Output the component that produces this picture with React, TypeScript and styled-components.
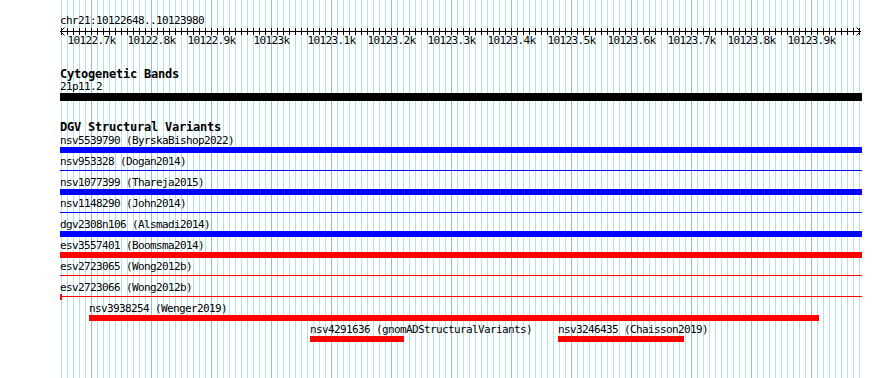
import React from 'react';
import styled, { createGlobalStyle } from 'styled-components';

const Global = createGlobalStyle`
  html, body { margin: 0; padding: 0; background: #ffffff; }
  body { font-family: "DejaVu Sans Mono", "Liberation Mono", monospace; color: #000; }
`;

const PANEL_W = 802;
const PANEL_H = 378;
const bpToX = (bp: number) => (bp - 10122700) * 0.6 + 31;

const Page = styled.div`
  width: 890px;
  height: ${PANEL_H}px;
  background: #ffffff;
  overflow: hidden;
`;

const Panel = styled.div`
  position: relative;
  margin-left: 60px;
  width: ${PANEL_W}px;
  height: ${PANEL_H}px;
`;

const GridLayer = styled.svg`
  position: absolute;
  left: 0;
  top: 0;
  display: block;
  shape-rendering: crispEdges;
`;

const Content = styled.div`
  position: relative;
  display: flex;
  flex-direction: column;
`;

const RulerSvg = styled.svg`
  display: block;
  flex: none;
  font-family: "DejaVu Sans Mono", monospace;
  font-size: 11px;
`;

const TrackTitle = styled.div`
  margin-top: 21px;
  height: 12px;
  line-height: 10px;
  font-size: 12px;
  font-weight: bold;
  letter-spacing: -0.22px;
  white-space: nowrap;
`;

const BandLabel = styled.div`
  margin-top: 1px;
  height: 11px;
  line-height: 9px;
  font-size: 11px;
  letter-spacing: -0.62px;
  white-space: nowrap;
`;

const BandBar = styled.div`
  height: 8px;
  background: #000;
`;

const Rows = styled.div`
  margin-top: 2px;
  display: flex;
  flex-direction: column;
`;

const Row = styled.div`
  position: relative;
  height: 21px;
`;

const Feature = styled.div`
  position: absolute;
  top: 0;
  display: flex;
  flex-direction: column;
`;

const FeatureLabel = styled.div`
  height: 11px;
  line-height: 9px;
  font-size: 11px;
  letter-spacing: -0.62px;
  white-space: nowrap;
`;

const BarSlot = styled.div`
  position: relative;
  height: 6px;
`;

const ThickBar = styled.div<{ $color: string }>`
  height: 6px;
  background: ${(p) => p.$color};
`;

const ThinBar = styled.div<{ $color: string }>`
  margin-top: 2px;
  height: 1px;
  background: ${(p) => p.$color};
`;

const StartCap = styled.div<{ $color: string }>`
  position: absolute;
  left: 0;
  top: 0;
  width: 2px;
  height: 6px;
  background: ${(p) => p.$color};
`;

type Feat = {
  label: string;
  left: number;
  width: number;
  color: string;
  thin?: boolean;
  cap?: boolean;
};

const BLUE = '#0000ff';
const RED = '#ff0000';

const rows: Feat[][] = [
  [{ label: 'nsv5539790 (ByrskaBishop2022)', left: 0, width: PANEL_W, color: BLUE }],
  [{ label: 'nsv953328 (Dogan2014)', left: 0, width: PANEL_W, color: BLUE, thin: true }],
  [{ label: 'nsv1077399 (Thareja2015)', left: 0, width: PANEL_W, color: BLUE }],
  [{ label: 'nsv1148290 (John2014)', left: 0, width: PANEL_W, color: BLUE, thin: true }],
  [{ label: 'dgv2308n106 (Alsmadi2014)', left: 0, width: PANEL_W, color: BLUE }],
  [{ label: 'esv3557401 (Boomsma2014)', left: 0, width: PANEL_W, color: RED }],
  [{ label: 'esv2723065 (Wong2012b)', left: 0, width: PANEL_W, color: RED, thin: true }],
  [{ label: 'esv2723066 (Wong2012b)', left: 0, width: PANEL_W, color: RED, thin: true, cap: true }],
  [{ label: 'nsv3938254 (Wenger2019)', left: 29, width: 730, color: RED }],
  [
    { label: 'nsv4291636 (gnomADStructuralVariants)', left: 250, width: 94, color: RED },
    { label: 'nsv3246435 (Chaisson2019)', left: 498, width: 126, color: RED },
  ],
];

const tickLabels = [
  '10122.7k', '10122.8k', '10122.9k', '10123k', '10123.1k', '10123.2k', '10123.3k',
  '10123.4k', '10123.5k', '10123.6k', '10123.7k', '10123.8k', '10123.9k',
];

const minorXs: number[] = [];
for (let x = 1; x < 801; x += 6) minorXs.push(x);

function Grid() {
  return (
    <GridLayer width={PANEL_W} height={PANEL_H} aria-hidden="true">
      {minorXs.map((x) => (
        <rect
          key={x}
          x={x}
          y={0}
          width={1}
          height={PANEL_H}
          fill={(x - 31) % 60 === 0 ? '#8cbde6' : '#b0e4e8'}
        />
      ))}
    </GridLayer>
  );
}

function Ruler() {
  return (
    <RulerSvg width={PANEL_W} height={48} viewBox={`0 0 ${PANEL_W} 48`}>
      <text x={0} y={24} letterSpacing={-0.62} fill="#000">chr21:10122648..10123980</text>
      <rect x={0} y={31} width={801} height={1} fill="#000" />
      <polyline points="4.5,27.5 0.5,31.5 4.5,35.5" fill="none" stroke="#000" strokeWidth={1} />
      <polyline points="796.5,27.5 800.5,31.5 796.5,35.5" fill="none" stroke="#000" strokeWidth={1} />
      {minorXs.map((x) => (
        <rect key={x} x={x} y={28} width={1} height={7} fill="#000" />
      ))}
      {tickLabels.map((t, i) => (
        <text
          key={t}
          x={bpToX(10122700 + i * 100) + 0.5}
          y={44}
          textAnchor="middle"
          letterSpacing={-0.62}
          fill="#000"
        >
          {t}
        </text>
      ))}
    </RulerSvg>
  );
}

export default function App() {
  return (
    <Page>
      <Global />
      <Panel>
        <Grid />
        <Content>
          <Ruler />
          <TrackTitle>Cytogenetic Bands</TrackTitle>
          <BandLabel>21p11.2</BandLabel>
          <BandBar />
          <TrackTitle>DGV Structural Variants</TrackTitle>
          <Rows>
            {rows.map((r, i) => (
              <Row key={i}>
                {r.map((f) => (
                  <Feature key={f.label} style={{ left: f.left, width: f.width }}>
                    <FeatureLabel>{f.label}</FeatureLabel>
                    <BarSlot>
                      {f.thin ? <ThinBar $color={f.color} /> : <ThickBar $color={f.color} />}
                      {f.cap && <StartCap $color={f.color} />}
                    </BarSlot>
                  </Feature>
                ))}
              </Row>
            ))}
          </Rows>
        </Content>
      </Panel>
    </Page>
  );
}
